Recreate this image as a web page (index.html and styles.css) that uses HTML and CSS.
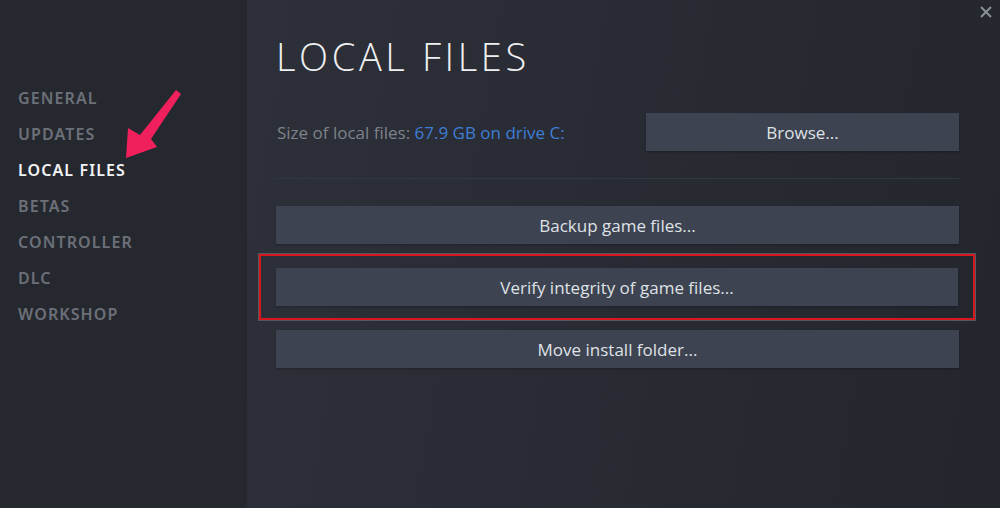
FILE: index.html
```html
<!DOCTYPE html>
<html>
<head>
<meta charset="utf-8">
<link rel="stylesheet" href="styles.css">
</head>
<body>
<div class="app">
  <nav class="sidebar">
    <div class="nav-item">GENERAL</div>
    <div class="nav-item">UPDATES</div>
    <div class="nav-item active">LOCAL FILES</div>
    <div class="nav-item">BETAS</div>
    <div class="nav-item">CONTROLLER</div>
    <div class="nav-item">DLC</div>
    <div class="nav-item">WORKSHOP</div>
  </nav>
  <main class="main">
    <h1 class="title">LOCAL FILES</h1>
    <div class="size-row">
      <div class="size-text">Size of local files: <span class="size-link">67.9 GB on drive C:</span></div>
      <button class="btn browse">Browse...</button>
    </div>
    <div class="sep"></div>
    <div class="actions">
      <button class="btn">Backup game files...</button>
      <div class="highlight">
        <button class="btn">Verify integrity of game files...</button>
      </div>
      <button class="btn">Move install folder...</button>
    </div>
  </main>
  <div class="close">
    <svg width="12" height="12" viewBox="0 0 12 12"><path d="M1 1L11 11M11 1L1 11" stroke="#8a8e96" stroke-width="2"/></svg>
  </div>
  <svg class="arrow" width="200" height="170" viewBox="0 0 200 170">
    <polygon points="176,90 181,94 151,139 157,147 126,158 128,128 140,135" fill="#f0205c"/>
  </svg>
</div>
</body>
</html>
```
FILE: styles.css
```css
html, body {
  margin: 0;
  padding: 0;
  background: #25272e;
}
.app {
  position: relative;
  display: flex;
  width: 1000px;
  height: 508px;
  overflow: hidden;
  font-family: "Open Sans", "Noto Sans", sans-serif;
}
.sidebar {
  width: 247px;
  flex: none;
  background: #26282f;
  padding-top: 80px;
  box-sizing: border-box;
}
.nav-item {
  height: 36px;
  line-height: 36px;
  padding-left: 18px;
  font-family: "Noto Sans", sans-serif;
  font-weight: 600;
  font-size: 16px;
  color: #6c7079;
  letter-spacing: 1.1px;
}
.nav-item.active {
  color: #f2f3f4;
}
.main {
  flex: 1;
  background: linear-gradient(100deg, #2d3038 0%, #292c34 40%, #23262d 100%);
  padding: 0 41px 0 29px;
  box-sizing: border-box;
}
.title {
  margin: 33px 0 0 0;
  font-weight: 300;
  font-size: 38px;
  line-height: 46px;
  letter-spacing: 3.6px;
  color: #eef0f2;
}
.size-row {
  display: flex;
  align-items: center;
  justify-content: space-between;
  margin-top: 34px;
}
.size-text {
  font-size: 17px;
  color: #7d828b;
  padding-left: 1px;
}
.size-link {
  color: #3f7ed6;
}
.btn {
  display: block;
  height: 38px;
  border: none;
  background: #3d4350;
  color: #dfe2e6;
  font-family: "Open Sans", "Noto Sans", sans-serif;
  font-size: 17px;
  width: 100%;
  padding: 0;
  box-shadow: 0 1px 2px rgba(0,0,0,0.25);
}
.btn.browse {
  width: 313px;
}
.sep {
  height: 1px;
  background: #33373f;
  margin-top: 27px;
}
.actions {
  display: flex;
  flex-direction: column;
  margin-top: 27px;
}
.highlight {
  margin: 10px -16px 10px -17px;
  padding: 12px 15px 12px 15px;
  border: 2px solid #d8161e;
  box-shadow: 0 0 0 1px #55585f;
}
.close {
  position: absolute;
  top: 1px;
  right: 8px;
}
.arrow {
  position: absolute;
  left: 0;
  top: 0;
}
```
